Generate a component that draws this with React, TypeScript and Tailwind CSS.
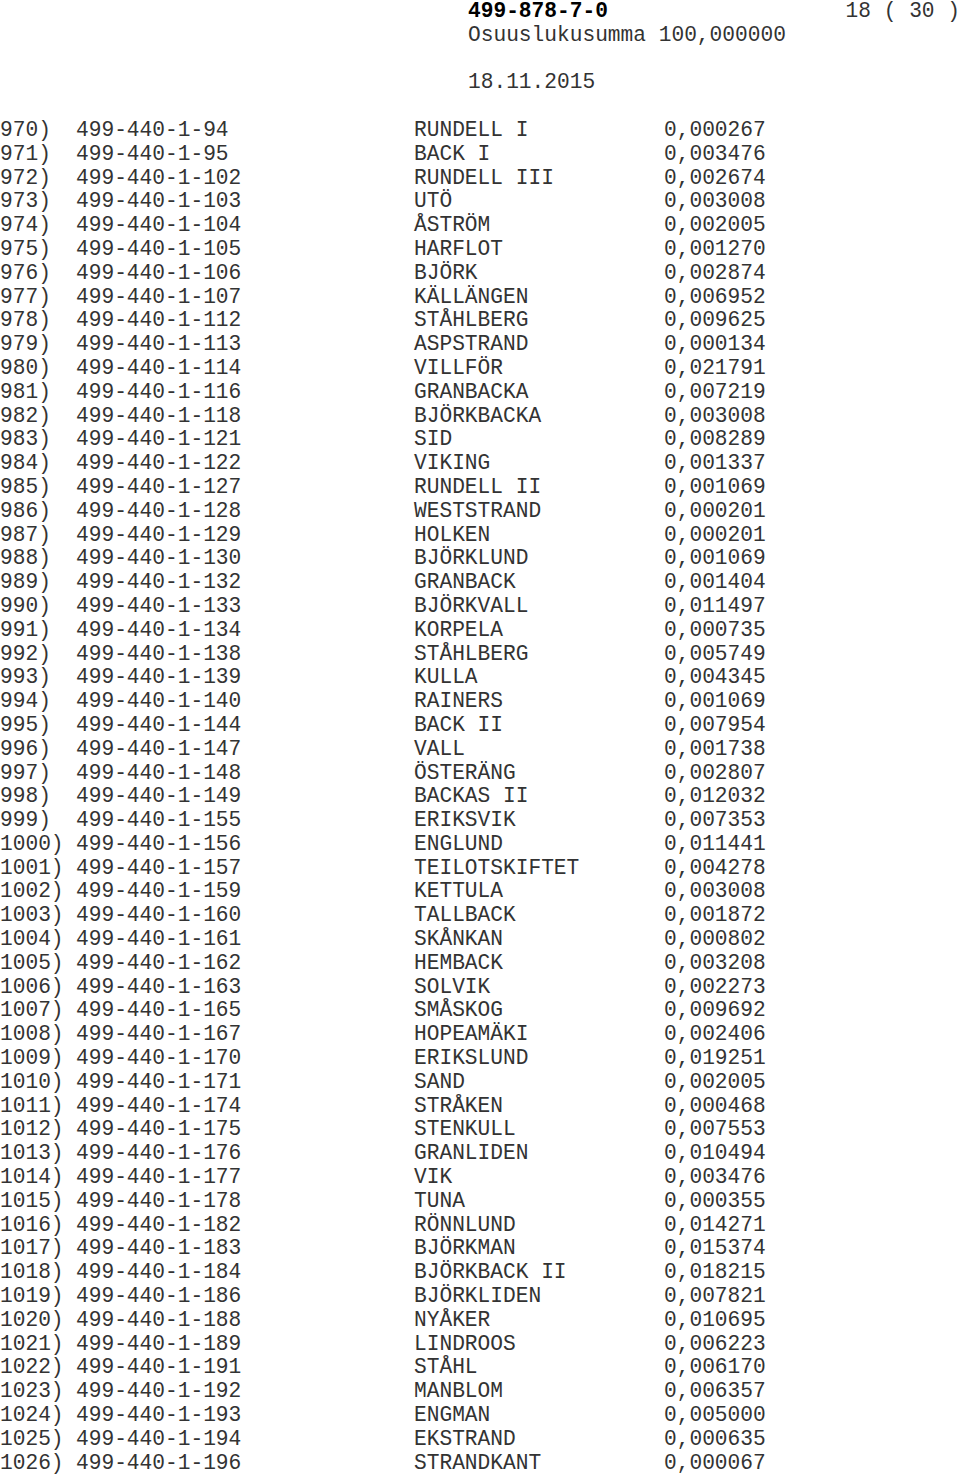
const rows: [string, string, string, string][] = [
  ["970)", "499-440-1-94", "RUNDELL I", "0,000267"],
  ["971)", "499-440-1-95", "BACK I", "0,003476"],
  ["972)", "499-440-1-102", "RUNDELL III", "0,002674"],
  ["973)", "499-440-1-103", "UTÖ", "0,003008"],
  ["974)", "499-440-1-104", "ÅSTRÖM", "0,002005"],
  ["975)", "499-440-1-105", "HARFLOT", "0,001270"],
  ["976)", "499-440-1-106", "BJÖRK", "0,002874"],
  ["977)", "499-440-1-107", "KÄLLÄNGEN", "0,006952"],
  ["978)", "499-440-1-112", "STÅHLBERG", "0,009625"],
  ["979)", "499-440-1-113", "ASPSTRAND", "0,000134"],
  ["980)", "499-440-1-114", "VILLFÖR", "0,021791"],
  ["981)", "499-440-1-116", "GRANBACKA", "0,007219"],
  ["982)", "499-440-1-118", "BJÖRKBACKA", "0,003008"],
  ["983)", "499-440-1-121", "SID", "0,008289"],
  ["984)", "499-440-1-122", "VIKING", "0,001337"],
  ["985)", "499-440-1-127", "RUNDELL II", "0,001069"],
  ["986)", "499-440-1-128", "WESTSTRAND", "0,000201"],
  ["987)", "499-440-1-129", "HOLKEN", "0,000201"],
  ["988)", "499-440-1-130", "BJÖRKLUND", "0,001069"],
  ["989)", "499-440-1-132", "GRANBACK", "0,001404"],
  ["990)", "499-440-1-133", "BJÖRKVALL", "0,011497"],
  ["991)", "499-440-1-134", "KORPELA", "0,000735"],
  ["992)", "499-440-1-138", "STÅHLBERG", "0,005749"],
  ["993)", "499-440-1-139", "KULLA", "0,004345"],
  ["994)", "499-440-1-140", "RAINERS", "0,001069"],
  ["995)", "499-440-1-144", "BACK II", "0,007954"],
  ["996)", "499-440-1-147", "VALL", "0,001738"],
  ["997)", "499-440-1-148", "ÖSTERÄNG", "0,002807"],
  ["998)", "499-440-1-149", "BACKAS II", "0,012032"],
  ["999)", "499-440-1-155", "ERIKSVIK", "0,007353"],
  ["1000)", "499-440-1-156", "ENGLUND", "0,011441"],
  ["1001)", "499-440-1-157", "TEILOTSKIFTET", "0,004278"],
  ["1002)", "499-440-1-159", "KETTULA", "0,003008"],
  ["1003)", "499-440-1-160", "TALLBACK", "0,001872"],
  ["1004)", "499-440-1-161", "SKÅNKAN", "0,000802"],
  ["1005)", "499-440-1-162", "HEMBACK", "0,003208"],
  ["1006)", "499-440-1-163", "SOLVIK", "0,002273"],
  ["1007)", "499-440-1-165", "SMÅSKOG", "0,009692"],
  ["1008)", "499-440-1-167", "HOPEAMÄKI", "0,002406"],
  ["1009)", "499-440-1-170", "ERIKSLUND", "0,019251"],
  ["1010)", "499-440-1-171", "SAND", "0,002005"],
  ["1011)", "499-440-1-174", "STRÅKEN", "0,000468"],
  ["1012)", "499-440-1-175", "STENKULL", "0,007553"],
  ["1013)", "499-440-1-176", "GRANLIDEN", "0,010494"],
  ["1014)", "499-440-1-177", "VIK", "0,003476"],
  ["1015)", "499-440-1-178", "TUNA", "0,000355"],
  ["1016)", "499-440-1-182", "RÖNNLUND", "0,014271"],
  ["1017)", "499-440-1-183", "BJÖRKMAN", "0,015374"],
  ["1018)", "499-440-1-184", "BJÖRKBACK II", "0,018215"],
  ["1019)", "499-440-1-186", "BJÖRKLIDEN", "0,007821"],
  ["1020)", "499-440-1-188", "NYÅKER", "0,010695"],
  ["1021)", "499-440-1-189", "LINDROOS", "0,006223"],
  ["1022)", "499-440-1-191", "STÅHL", "0,006170"],
  ["1023)", "499-440-1-192", "MANBLOM", "0,006357"],
  ["1024)", "499-440-1-193", "ENGMAN", "0,005000"],
  ["1025)", "499-440-1-194", "EKSTRAND", "0,000635"],
  ["1026)", "499-440-1-196", "STRANDKANT", "0,000067"],
]

export default function App() {
  return (
    <div className="w-[960px] h-[1474px] overflow-hidden bg-white text-[#333] font-['Liberation_Mono','Courier_New',monospace] text-[21.2px] leading-[23.8px] whitespace-pre">
      <div className="flex">
        <span className="ml-[468px] w-[380px] font-bold text-black">499-878-7-0</span>
        <span>18 ( 30 )</span>
      </div>
      <div className="ml-[468px]">Osuuslukusumma 100,000000</div>
      <div className="h-[23.8px]" />
      <div className="ml-[468px]">18.11.2015</div>
      <div className="h-[23.8px]" />
      {rows.map(([num, id, name, value]) => (
        <div key={num} className="flex">
          <span className="w-[76px]">{num}</span>
          <span className="w-[338px]">{id}</span>
          <span className="w-[250px]">{name}</span>
          <span>{value}</span>
        </div>
      ))}
    </div>
  )
}
